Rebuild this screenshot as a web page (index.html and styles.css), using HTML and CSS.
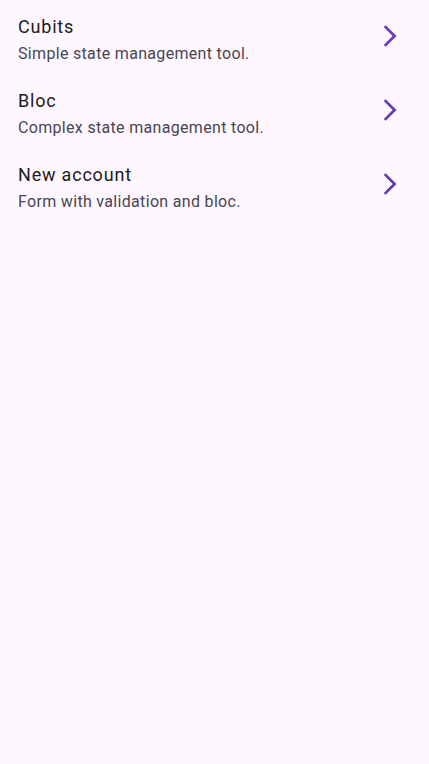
FILE: index.html
```html
<!DOCTYPE html>
<html>
<head>
<meta charset="utf-8">
<link rel="stylesheet" href="styles.css">
</head>
<body>
<ul class="list">
  <li class="tile">
    <div class="text">
      <div class="title">Cubits</div>
      <div class="subtitle">Simple state management tool.</div>
    </div>
    <svg class="chev" viewBox="0 0 24 24"><path d="M6.23 20.23 8 22l10-10L8 2 6.23 3.77 14.46 12z"/></svg>
  </li>
  <li class="tile">
    <div class="text">
      <div class="title">Bloc</div>
      <div class="subtitle">Complex state management tool.</div>
    </div>
    <svg class="chev" viewBox="0 0 24 24"><path d="M6.23 20.23 8 22l10-10L8 2 6.23 3.77 14.46 12z"/></svg>
  </li>
  <li class="tile">
    <div class="text">
      <div class="title">New account</div>
      <div class="subtitle">Form with validation and bloc.</div>
    </div>
    <svg class="chev" viewBox="0 0 24 24"><path d="M6.23 20.23 8 22l10-10L8 2 6.23 3.77 14.46 12z"/></svg>
  </li>
</ul>
</body>
</html>
```
FILE: styles.css
```css
html, body {
  margin: 0;
  padding: 0;
  background: #FEF7FF;
  font-family: Roboto, "Noto Sans", sans-serif;
}
body {
  width: 429px;
  height: 764px;
}
.list {
  list-style: none;
  margin: 0;
  padding: 0;
}
.tile {
  height: 74px;
  display: flex;
  align-items: center;
  padding: 0 26px 0 18px;
  box-sizing: border-box;
}
.text {
  flex: 1;
  display: flex;
  flex-direction: column;
  padding-top: 4px;
}
.title {
  font-size: 18px;
  line-height: 27px;
  letter-spacing: 0.8px;
  color: #1D1B20;
}
.subtitle {
  margin-top: 2px;
  font-size: 16px;
  line-height: 23px;
  letter-spacing: 0.32px;
  color: #49454F;
}
.chev {
  width: 26px;
  height: 26px;
  margin-bottom: 2px;
  fill: #673AB7;
}
```
